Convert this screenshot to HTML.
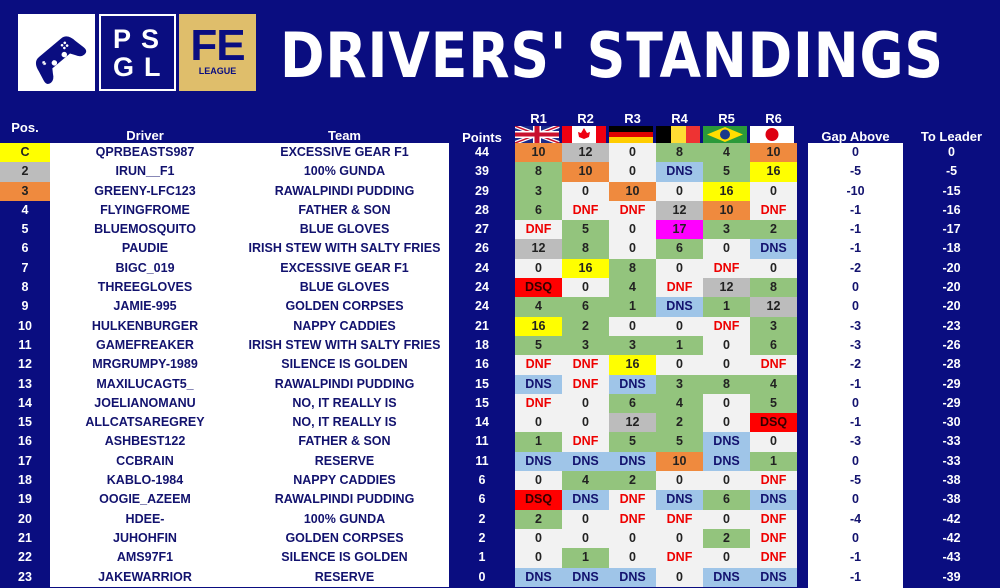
<!DOCTYPE html>
<html><head><style>
*{margin:0;padding:0;box-sizing:border-box}
body{width:1000px;height:588px;background:#0a0d80;position:relative;overflow:hidden;font-family:"Liberation Sans",sans-serif;font-weight:bold}
.abs{position:absolute}
.hd{position:absolute;color:#fff;font-size:13px;text-align:center}
#rows{position:absolute;top:143px;left:0;width:1000px}
.r{display:flex;height:19.3px;line-height:19.3px;font-size:12.5px;text-align:center}
.r span{display:block}
.p{width:50px;color:#fff}
.d{width:190px;background:#fff;color:#12126e}
.t{width:209px;background:#fff;color:#12126e}
.pt{width:66px;color:#fff}
.c{width:47px;color:#222}
.sp{width:11px}
.ga{width:95px;background:#fff;color:#12126e}
.le{width:97px;color:#fff}
.g{background:#93c47d}.l{background:#f2f2f2}.b{background:#9fc5e8;color:#12126e!important}.x{background:#f2f2f2;color:#e00!important}
.q{background:#f00;color:#300!important}.y{background:#ff0}.m{background:#f0f}.s{background:#bcbcbc}.o{background:#ef8a3e}
.p1{background:#ff0;color:#222}.p2{background:#bcbcbc;color:#222}.p3{background:#ef8a3e;color:#222}
</style></head><body>
<div class="abs" style="left:18px;top:14px;width:77px;height:77px;background:#fff;overflow:hidden">
<svg width="77" height="77" viewBox="0 0 77 77"><g transform="translate(39,42) rotate(-40) scale(0.72)"><path d="M-20,-15 H20 Q31,-15 33,0 L36,14 Q38,23 30,23 Q24,23 20,15 L16,9 H-16 L-20,15 Q-24,23 -30,23 Q-38,23 -36,14 L-33,0 Q-31,-15 -20,-15Z" fill="#0a0d80"/><circle cx="15" cy="-7" r="1.8" fill="#fff"/><circle cx="20" cy="-7" r="1.8" fill="#fff"/><circle cx="15" cy="-2" r="1.8" fill="#fff"/><circle cx="20" cy="-2" r="1.8" fill="#fff"/><circle cx="9" cy="5" r="3.8" fill="#fff"/><circle cx="-9" cy="5" r="3.8" fill="#fff"/><path d="M-22,-6 l4,4 M-18,-6 l-4,4 M-20,-7 v6" stroke="#fff" stroke-width="1.5"/></g></svg></div>
<div class="abs" style="left:99px;top:14px;width:77px;height:77px;border:2px solid #fff;color:#fff;font-size:27px;line-height:28px;padding:9px 0 0 12px;letter-spacing:10px">PS<br>GL</div>
<div class="abs" style="left:179px;top:14px;width:77px;height:77px;background:#dfbe6b;color:#0a0d80;text-align:center"><div style="font-size:44px;line-height:44px;margin-top:10px;letter-spacing:-1px">FE</div><div style="font-size:9px;margin-top:-2px">LEAGUE</div></div>
<div class="abs" style="left:280px;top:19px;font-size:62px;color:#fff;white-space:nowrap;transform:scaleX(0.865);transform-origin:left top;letter-spacing:1px;font-family:'DejaVu Sans',sans-serif">DRIVERS' STANDINGS</div>
<div class="hd" style="left:0;width:50px;top:120px">Pos.</div>
<div class="hd" style="left:50px;width:190px;top:128px">Driver</div>
<div class="hd" style="left:240px;width:209px;top:128px">Team</div>
<div class="hd" style="left:449px;width:66px;top:130px">Points</div>
<div class="hd" style="left:515px;width:47px;top:111px">R1</div>
<div class="hd" style="left:562px;width:47px;top:111px">R2</div>
<div class="hd" style="left:609px;width:47px;top:111px">R3</div>
<div class="hd" style="left:656px;width:47px;top:111px">R4</div>
<div class="hd" style="left:703px;width:47px;top:111px">R5</div>
<div class="hd" style="left:750px;width:47px;top:111px">R6</div>
<svg class="abs" style="left:515px;top:126px" width="282" height="17">
<rect x="0" width="44" height="17" fill="#1b2a8a"/><path d="M0 0L44 17M44 0L0 17" stroke="#fff" stroke-width="4"/><path d="M0 0L44 17M44 0L0 17" stroke="#c8102e" stroke-width="1.5"/><rect x="18" width="8" height="17" fill="#fff"/><rect x="0" y="5" width="44" height="7" fill="#fff"/><rect x="19.5" width="5" height="17" fill="#c8102e"/><rect x="0" y="6.5" width="44" height="4" fill="#c8102e"/>
<rect x="47" width="44" height="17" fill="#fff"/><rect x="47" width="10" height="17" fill="#e01"/><rect x="81" width="10" height="17" fill="#e01"/><path d="M69 2L72 7L75 6L74 11L69 13L64 11L63 6L66 7Z" fill="#e01"/>
<rect x="94" width="44" height="6" fill="#000"/><rect x="94" y="6" width="44" height="5" fill="#d00"/><rect x="94" y="11" width="44" height="6" fill="#fc0"/>
<rect x="141" width="15" height="17" fill="#000"/><rect x="156" width="15" height="17" fill="#fd3"/><rect x="171" width="14" height="17" fill="#e33"/>
<rect x="188" width="44" height="17" fill="#2a9a3a"/><path d="M192 8.5L210 1L228 8.5L210 16Z" fill="#fd0"/><circle cx="210" cy="8.5" r="5" fill="#1a3a8a"/>
<rect x="235" width="44" height="17" fill="#fff"/><circle cx="257" cy="8.5" r="6.5" fill="#d01"/>
</svg>
<div class="abs" style="left:808px;top:143px;width:95px;height:445px;background:#fff"></div>
<div class="hd" style="left:808px;width:95px;top:129px">Gap Above</div>
<div class="hd" style="left:903px;width:97px;top:129px">To Leader</div>
<div id="rows">
<div class="r"><span class="p p1">C</span><span class="d">QPRBEASTS987</span><span class="t">EXCESSIVE GEAR F1</span><span class="pt">44</span><span class="c o">10</span><span class="c s">12</span><span class="c l">0</span><span class="c g">8</span><span class="c g">4</span><span class="c o">10</span><span class="sp"></span><span class="ga">0</span><span class="le">0</span></div>
<div class="r"><span class="p p2">2</span><span class="d">IRUN__F1</span><span class="t">100% GUNDA</span><span class="pt">39</span><span class="c g">8</span><span class="c o">10</span><span class="c l">0</span><span class="c b">DNS</span><span class="c g">5</span><span class="c y">16</span><span class="sp"></span><span class="ga">-5</span><span class="le">-5</span></div>
<div class="r"><span class="p p3">3</span><span class="d">GREENY-LFC123</span><span class="t">RAWALPINDI PUDDING</span><span class="pt">29</span><span class="c g">3</span><span class="c l">0</span><span class="c o">10</span><span class="c l">0</span><span class="c y">16</span><span class="c l">0</span><span class="sp"></span><span class="ga">-10</span><span class="le">-15</span></div>
<div class="r"><span class="p">4</span><span class="d">FLYINGFROME</span><span class="t">FATHER &amp; SON</span><span class="pt">28</span><span class="c g">6</span><span class="c x">DNF</span><span class="c x">DNF</span><span class="c s">12</span><span class="c o">10</span><span class="c x">DNF</span><span class="sp"></span><span class="ga">-1</span><span class="le">-16</span></div>
<div class="r"><span class="p">5</span><span class="d">BLUEMOSQUITO</span><span class="t">BLUE GLOVES</span><span class="pt">27</span><span class="c x">DNF</span><span class="c g">5</span><span class="c l">0</span><span class="c m">17</span><span class="c g">3</span><span class="c g">2</span><span class="sp"></span><span class="ga">-1</span><span class="le">-17</span></div>
<div class="r"><span class="p">6</span><span class="d">PAUDIE</span><span class="t">IRISH STEW WITH SALTY FRIES</span><span class="pt">26</span><span class="c s">12</span><span class="c g">8</span><span class="c l">0</span><span class="c g">6</span><span class="c l">0</span><span class="c b">DNS</span><span class="sp"></span><span class="ga">-1</span><span class="le">-18</span></div>
<div class="r"><span class="p">7</span><span class="d">BIGC_019</span><span class="t">EXCESSIVE GEAR F1</span><span class="pt">24</span><span class="c l">0</span><span class="c y">16</span><span class="c g">8</span><span class="c l">0</span><span class="c x">DNF</span><span class="c l">0</span><span class="sp"></span><span class="ga">-2</span><span class="le">-20</span></div>
<div class="r"><span class="p">8</span><span class="d">THREEGLOVES</span><span class="t">BLUE GLOVES</span><span class="pt">24</span><span class="c q">DSQ</span><span class="c l">0</span><span class="c g">4</span><span class="c x">DNF</span><span class="c s">12</span><span class="c g">8</span><span class="sp"></span><span class="ga">0</span><span class="le">-20</span></div>
<div class="r"><span class="p">9</span><span class="d">JAMIE-995</span><span class="t">GOLDEN CORPSES</span><span class="pt">24</span><span class="c g">4</span><span class="c g">6</span><span class="c g">1</span><span class="c b">DNS</span><span class="c g">1</span><span class="c s">12</span><span class="sp"></span><span class="ga">0</span><span class="le">-20</span></div>
<div class="r"><span class="p">10</span><span class="d">HULKENBURGER</span><span class="t">NAPPY CADDIES</span><span class="pt">21</span><span class="c y">16</span><span class="c g">2</span><span class="c l">0</span><span class="c l">0</span><span class="c x">DNF</span><span class="c g">3</span><span class="sp"></span><span class="ga">-3</span><span class="le">-23</span></div>
<div class="r"><span class="p">11</span><span class="d">GAMEFREAKER</span><span class="t">IRISH STEW WITH SALTY FRIES</span><span class="pt">18</span><span class="c g">5</span><span class="c g">3</span><span class="c g">3</span><span class="c g">1</span><span class="c l">0</span><span class="c g">6</span><span class="sp"></span><span class="ga">-3</span><span class="le">-26</span></div>
<div class="r"><span class="p">12</span><span class="d">MRGRUMPY-1989</span><span class="t">SILENCE IS GOLDEN</span><span class="pt">16</span><span class="c x">DNF</span><span class="c x">DNF</span><span class="c y">16</span><span class="c l">0</span><span class="c l">0</span><span class="c x">DNF</span><span class="sp"></span><span class="ga">-2</span><span class="le">-28</span></div>
<div class="r"><span class="p">13</span><span class="d">MAXILUCAGT5_</span><span class="t">RAWALPINDI PUDDING</span><span class="pt">15</span><span class="c b">DNS</span><span class="c x">DNF</span><span class="c b">DNS</span><span class="c g">3</span><span class="c g">8</span><span class="c g">4</span><span class="sp"></span><span class="ga">-1</span><span class="le">-29</span></div>
<div class="r"><span class="p">14</span><span class="d">JOELIANOMANU</span><span class="t">NO, IT REALLY IS</span><span class="pt">15</span><span class="c x">DNF</span><span class="c l">0</span><span class="c g">6</span><span class="c g">4</span><span class="c l">0</span><span class="c g">5</span><span class="sp"></span><span class="ga">0</span><span class="le">-29</span></div>
<div class="r"><span class="p">15</span><span class="d">ALLCATSAREGREY</span><span class="t">NO, IT REALLY IS</span><span class="pt">14</span><span class="c l">0</span><span class="c l">0</span><span class="c s">12</span><span class="c g">2</span><span class="c l">0</span><span class="c q">DSQ</span><span class="sp"></span><span class="ga">-1</span><span class="le">-30</span></div>
<div class="r"><span class="p">16</span><span class="d">ASHBEST122</span><span class="t">FATHER &amp; SON</span><span class="pt">11</span><span class="c g">1</span><span class="c x">DNF</span><span class="c g">5</span><span class="c g">5</span><span class="c b">DNS</span><span class="c l">0</span><span class="sp"></span><span class="ga">-3</span><span class="le">-33</span></div>
<div class="r"><span class="p">17</span><span class="d">CCBRAIN</span><span class="t">RESERVE</span><span class="pt">11</span><span class="c b">DNS</span><span class="c b">DNS</span><span class="c b">DNS</span><span class="c o">10</span><span class="c b">DNS</span><span class="c g">1</span><span class="sp"></span><span class="ga">0</span><span class="le">-33</span></div>
<div class="r"><span class="p">18</span><span class="d">KABLO-1984</span><span class="t">NAPPY CADDIES</span><span class="pt">6</span><span class="c l">0</span><span class="c g">4</span><span class="c g">2</span><span class="c l">0</span><span class="c l">0</span><span class="c x">DNF</span><span class="sp"></span><span class="ga">-5</span><span class="le">-38</span></div>
<div class="r"><span class="p">19</span><span class="d">OOGIE_AZEEM</span><span class="t">RAWALPINDI PUDDING</span><span class="pt">6</span><span class="c q">DSQ</span><span class="c b">DNS</span><span class="c x">DNF</span><span class="c b">DNS</span><span class="c g">6</span><span class="c b">DNS</span><span class="sp"></span><span class="ga">0</span><span class="le">-38</span></div>
<div class="r"><span class="p">20</span><span class="d">HDEE-</span><span class="t">100% GUNDA</span><span class="pt">2</span><span class="c g">2</span><span class="c l">0</span><span class="c x">DNF</span><span class="c x">DNF</span><span class="c l">0</span><span class="c x">DNF</span><span class="sp"></span><span class="ga">-4</span><span class="le">-42</span></div>
<div class="r"><span class="p">21</span><span class="d">JUHOHFIN</span><span class="t">GOLDEN CORPSES</span><span class="pt">2</span><span class="c l">0</span><span class="c l">0</span><span class="c l">0</span><span class="c l">0</span><span class="c g">2</span><span class="c x">DNF</span><span class="sp"></span><span class="ga">0</span><span class="le">-42</span></div>
<div class="r"><span class="p">22</span><span class="d">AMS97F1</span><span class="t">SILENCE IS GOLDEN</span><span class="pt">1</span><span class="c l">0</span><span class="c g">1</span><span class="c l">0</span><span class="c x">DNF</span><span class="c l">0</span><span class="c x">DNF</span><span class="sp"></span><span class="ga">-1</span><span class="le">-43</span></div>
<div class="r"><span class="p">23</span><span class="d">JAKEWARRIOR</span><span class="t">RESERVE</span><span class="pt">0</span><span class="c b">DNS</span><span class="c b">DNS</span><span class="c b">DNS</span><span class="c l">0</span><span class="c b">DNS</span><span class="c b">DNS</span><span class="sp"></span><span class="ga">-1</span><span class="le">-39</span></div>
</div>
</body></html>
